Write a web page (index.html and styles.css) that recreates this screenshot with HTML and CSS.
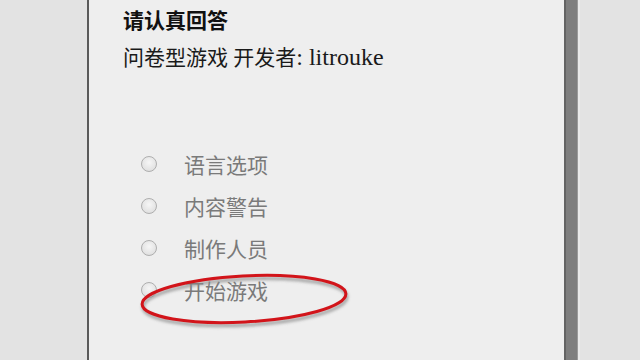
FILE: index.html
```html
<!DOCTYPE html>
<html lang="zh">
<head>
<meta charset="utf-8">
<link rel="stylesheet" href="styles.css">
</head>
<body>
<div class="page">
  <div class="panel">
    <div class="title">请认真回答</div>
    <div class="subtitle">问卷型游戏 开发者<span class="latin">: litrouke</span></div>
    <ul class="menu">
      <li class="item"><span class="radio"></span><span class="label">语言选项</span></li>
      <li class="item"><span class="radio"></span><span class="label">内容警告</span></li>
      <li class="item"><span class="radio"></span><span class="label">制作人员</span></li>
      <li class="item"><span class="radio"></span><span class="label">开始游戏</span></li>
    </ul>
  </div>
</div>
<svg class="mark" width="640" height="360" viewBox="0 0 640 360">
  <defs>
    <filter id="sh" x="-10%" y="-30%" width="120%" height="160%">
      <feGaussianBlur stdDeviation="1.6"/>
    </filter>
  </defs>
  <ellipse cx="245" cy="302" rx="102" ry="23" transform="rotate(-3 245 302)" fill="none" stroke="#8a8a8a" stroke-width="3" filter="url(#sh)" opacity="0.8"/>
  <ellipse cx="244" cy="299" rx="102" ry="23" transform="rotate(-3 244 299)" fill="none" stroke="#d2141a" stroke-width="3"/>
</svg>
</body>
</html>
```
FILE: styles.css
```css
html, body {
  margin: 0;
  padding: 0;
}
body {
  width: 640px;
  height: 360px;
  overflow: hidden;
  background: #e3e3e3;
  font-family: "Noto Sans CJK SC", sans-serif;
  position: relative;
}
.page {
  display: flex;
  height: 100%;
  padding-left: 87px;
}
.panel {
  width: 479px;
  height: 100%;
  box-sizing: border-box;
  background: #eeeeee;
  border-left: 2px solid #5a5a5a;
  border-right: 2px solid #636363;
  box-shadow: 11px 0 0 #7e7e7e, 12px 0 0 #9a9a9a, 14px 0 0 #e9e9e9;
  padding: 5px 0 0 34px;
}
.title {
  font-size: 21px;
  line-height: 28px;
  font-weight: bold;
  color: #111;
}
.subtitle {
  margin-top: 10px;
  font-family: "Liberation Serif", "Noto Sans CJK SC", serif;
  font-size: 21px;
  line-height: 28px;
  color: #1a1a1a;
}
.latin {
  font-size: 24px;
}
.menu {
  list-style: none;
  margin: 71px 0 0 0;
  padding: 0;
}
.item {
  display: flex;
  align-items: center;
  height: 42px;
}
.radio {
  width: 14px;
  height: 14px;
  border-radius: 50%;
  border: 1px solid #aeaeae;
  background: radial-gradient(circle at 50% 40%, #f6f6f6 0%, #e2e2e2 70%, #d2d2d2 100%);
  margin-left: 18px;
  flex: none;
}
.label {
  margin-left: 27px;
  font-size: 21px;
  color: #7a7a7a;
}
.mark {
  position: absolute;
  left: 0;
  top: 0;
  pointer-events: none;
}
```
